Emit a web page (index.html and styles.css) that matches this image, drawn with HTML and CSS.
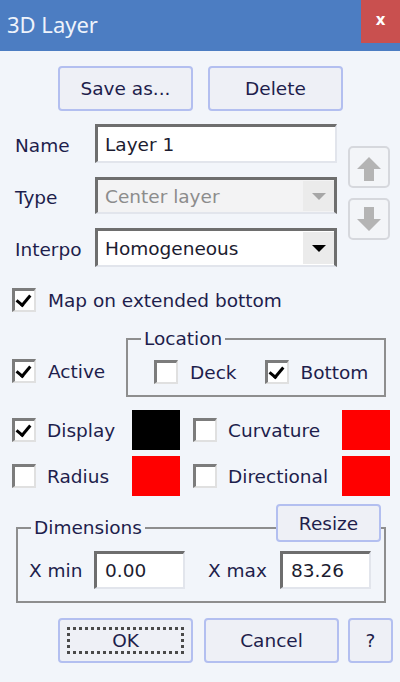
FILE: index.html
```html
<!DOCTYPE html>
<html lang="en">
<head>
  <meta charset="UTF-8" />
  <meta name="viewport" content="width=device-width, initial-scale=1.0" />
  <title>3D Layer</title>
  <link rel="stylesheet" href="styles.css">
</head>
<body>
  <header class="titlebar">
    <span class="title">3D Layer</span>
    <span class="close">x</span>
  </header>

  <div class="top-actions">
    <button class="btn wide">Save as...</button>
    <button class="btn wide">Delete</button>
  </div>

  <div class="props">
    <div class="fields">
      <label>Name</label>
      <div class="edit">Layer 1</div>
      <label>Type</label>
      <div class="combo disabled"><span>Center layer</span><span class="drop"></span></div>
      <label>Interpo</label>
      <div class="combo"><span>Homogeneous</span><span class="drop"></span></div>
    </div>
    <div class="movers">
      <button class="mover">
        <svg width="38" height="38" viewBox="0 0 38 38"><polygon points="19,9 31,21 24,21 24,33 14,33 14,21 7,21" fill="#b4b4b4"/></svg>
      </button>
      <button class="mover">
        <svg width="38" height="38" viewBox="0 0 38 38"><polygon points="19,31 31,19 24,19 24,7 14,7 14,19 7,19" fill="#b4b4b4"/></svg>
      </button>
    </div>
  </div>

  <div class="check map">
    <span class="cb on"></span><span>Map on extended bottom</span>
  </div>

  <div class="loc-row">
    <div class="check active">
      <span class="cb on"></span><span>Active</span>
    </div>
    <fieldset class="group location">
      <legend>Location</legend>
      <div class="loc-items">
        <div class="check"><span class="cb"></span><span>Deck</span></div>
        <div class="check"><span class="cb on"></span><span>Bottom</span></div>
      </div>
    </fieldset>
  </div>

  <div class="swatches">
    <div class="check"><span class="cb on"></span><span>Display</span></div>
    <span class="swatch black"></span>
    <div class="check"><span class="cb"></span><span>Curvature</span></div>
    <span class="swatch red"></span>
    <div class="check"><span class="cb"></span><span>Radius</span></div>
    <span class="swatch red"></span>
    <div class="check"><span class="cb"></span><span>Directional</span></div>
    <span class="swatch red"></span>
  </div>

  <fieldset class="group dims">
    <legend>Dimensions</legend>
    <button class="btn resize">Resize</button>
    <div class="dim-row">
      <label>X min</label>
      <div class="edit small">0.00</div>
      <label class="xmax">X max</label>
      <div class="edit small">83.26</div>
    </div>
  </fieldset>

  <div class="bottom-actions">
    <button class="btn wide focused">OK</button>
    <button class="btn wide cancel">Cancel</button>
    <button class="btn help">?</button>
  </div>
</body>
</html>
```

FILE: styles.css
```css
* { box-sizing: border-box; }
body { margin: 0; background: #f2f5fa; font-family: "DejaVu Sans", Verdana, sans-serif; font-size: 18.5px; color: #1e1e4c; }

.titlebar { display: flex; height: 51px; background: #4c7dc2; }
.title { font-family: "Noto Sans", sans-serif; font-size: 22px; line-height: 30px; color: #eef3fb; padding: 9px 0 0 7px; }
.close { margin-left: auto; width: 39px; height: 43px; background: #c9504f; color: #fff; font-weight: bold; font-size: 15px; display: flex; align-items: center; justify-content: center; padding-bottom: 3px; }

.btn { font: inherit; color: inherit; background: #eef0f6; border: 2px solid #b3bff0; border-radius: 4px; height: 45px; padding: 0; }
.wide { width: 135px; }

.top-actions { display: flex; gap: 15px; padding: 15px 0 0 58px; }

.props { display: flex; margin-top: 13px; padding-left: 15px; }
.fields { display: grid; grid-template-columns: 80px 242px; grid-template-rows: 39px 37px 39px; row-gap: 14px; align-items: center; }
.fields label { padding-top: 3px; }

.edit { height: 100%; background: #fff; border-style: solid; border-width: 3px 2px 2px 3px; border-color: #6e6e6e #e2e5ec #e2e5ec #6e6e6e; padding-left: 7px; display: flex; align-items: center; color: #1c1c30; }
.combo { height: 100%; background: #fff; border-style: solid; border-width: 3px 3px 2px 3px; border-color: #6e6e6e #6e6e6e #e2e5ec #6e6e6e; padding-left: 7px; display: flex; align-items: center; color: #1c1c30; }
.combo.disabled { background: #f3f3f4; color: #8c8c8c; }
.drop { margin-left: auto; width: 31px; align-self: stretch; margin-top: 1px; margin-bottom: 1px; background: #ebebeb; display: flex; align-items: center; justify-content: center; }
.drop::after { content: ""; border-left: 7px solid transparent; border-right: 7px solid transparent; border-top: 7px solid #000; }
.disabled .drop::after { border-top-color: #a6a6a6; }

.movers { display: flex; flex-direction: column; gap: 10px; margin: 22px 0 0 11px; }
.mover { width: 42px; height: 42px; padding: 0; border: 2px solid #d6d8dd; border-radius: 5px; background: #f3f5f8; }
.mover svg { display: block; }

.check { display: flex; align-items: center; gap: 12px; }
.cb { width: 24px; height: 24px; flex: none; background: #fff; border-style: solid; border-width: 3px 2px 2px 3px; border-color: #7c7c7c #e0e0e0 #e0e0e0 #7c7c7c; position: relative; }
.cb.on::after { content: ""; position: absolute; left: 4px; top: 1px; width: 6px; height: 11px; border: solid #000; border-width: 0 3px 3px 0; transform: rotate(40deg); }

.map { margin: 21px 0 0 12px; }

.loc-row { display: flex; align-items: flex-start; margin-top: 16px; padding: 0 14px 0 12px; }
.active { margin-top: 31px; }
.group { border: 2px solid #8e8e8e; margin: 0; padding: 0; min-width: 0; }
.group legend { padding: 0 3px; line-height: 22px; }
.location { margin-left: auto; width: 260px; height: 69px; }
.location legend { margin-left: 13px; }
.loc-items { display: flex; gap: 28px; padding: 10px 0 0 26px; }

.swatches { display: grid; grid-template-columns: 120px 61px 149px 48px; grid-auto-rows: 40px; row-gap: 6px; align-items: center; margin-top: 13px; padding-left: 12px; }
.swatches .check { gap: 11px; }
.swatch { width: 48px; height: 40px; }
.black { background: #000; }
.red { background: #ff0000; }

.dims { position: relative; margin: 21px 14px 0 16px; height: 86px; }
.dims legend { margin-left: 13px; }
.resize { position: absolute; left: 258px; top: -35px; width: 105px; height: 38px; }
.dim-row { display: grid; grid-template-columns: 65px 91px 95px 91px; grid-template-rows: 38px; align-items: center; padding: 12px 0 0 11px; }
.xmax { padding-left: 23px; }
.edit.small { padding-left: 8px; }

.bottom-actions { display: flex; padding: 15px 0 0 58px; }
.cancel { margin-left: 11px; }
.help { width: 45px; margin-left: 9px; }
.focused { outline: 3px dotted #4a4a4a; outline-offset: -12px; }
```
